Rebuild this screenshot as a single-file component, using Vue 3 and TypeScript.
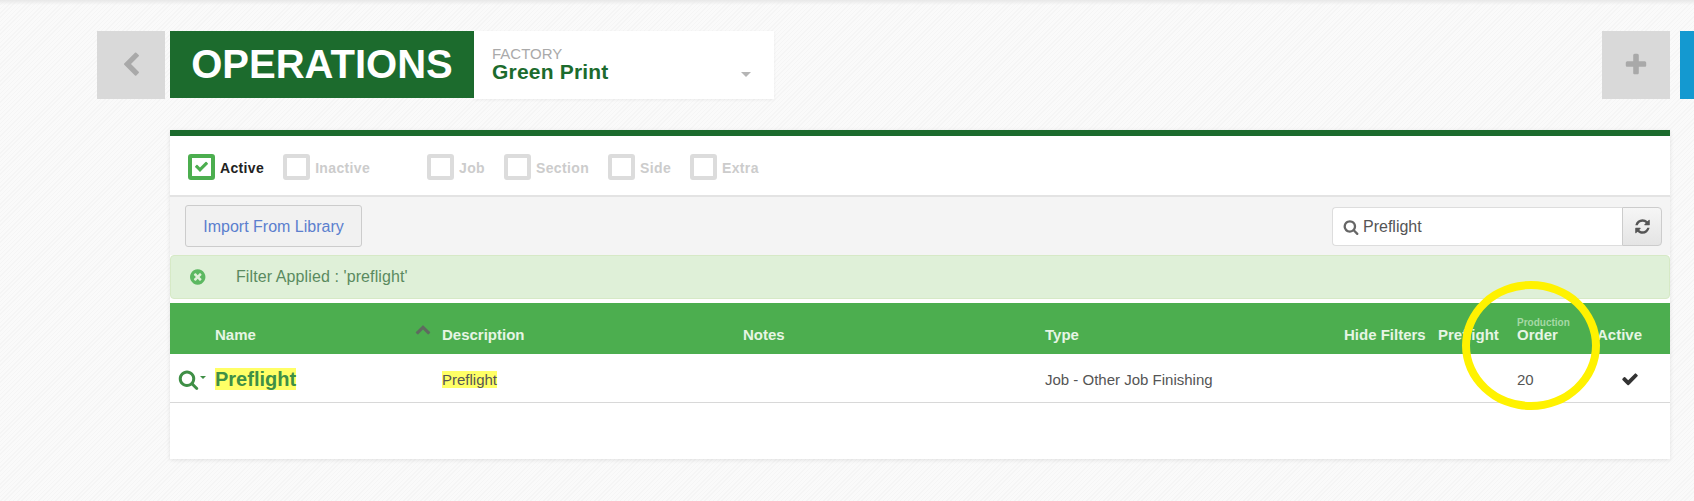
<script setup lang="ts">
type Filter = { label: string; checked?: boolean; gapAfter?: boolean }

const filters: Filter[] = [
  { label: 'Active', checked: true },
  { label: 'Inactive', gapAfter: true },
  { label: 'Job' },
  { label: 'Section' },
  { label: 'Side' },
  { label: 'Extra' }
]

// icon paths, all on a 1792 box
const icons = {
  chevronLeft: 'M1427 301l-531 531 531 531q19 19 19 45t-19 45l-166 166q-19 19-45 19t-45-19l-742-742q-19-19-19-45t19-45l742-742q19-19 45-19t45 19l166 166q19 19 19 45t-19 45z',
  chevronUp: 'M1683 1331l-166 165q-19 19-45 19t-45-19l-531-531-531 531q-19 19-45 19t-45-19l-166-165q-19-19-19-45.5t19-45.5l742-741q19-19 45-19t45 19l742 741q19 19 19 45.5t-19 45.5z',
  plus: 'M1600 736v192q0 40-28 68t-68 28h-416v416q0 40-28 68t-68 28h-192q-40 0-68-28t-28-68v-416h-416q-40 0-68-28t-28-68v-192q0-40 28-68t68-28h416v-416q0-40 28-68t68-28h192q40 0 68 28t28 68v416h416q40 0 68 28t28 68z',
  check: 'M1671 566q0 40-28 68l-724 724-136 136q-28 28-68 28t-68-28l-136-136-362-362q-28-28-28-68t28-68l136-136q28-28 68-28t68 28l294 295 656-657q28-28 68-28t68 28l136 136q28 28 28 68z',
  search: 'M1216 832q0-185-131.500-316.500t-316.500-131.500-316.500 131.500-131.500 316.500 131.500 316.500 316.500 131.500 316.500-131.500 131.500-316.500zm512 832q0 52-38 90t-90 38q-54 0-90-38l-343-342q-179 124-399 124-143 0-273.500-55.500t-225-150-150-225-55.500-273.500 55.500-273.500 150-225 225-150 273.500-55.500 273.500 55.500 225 150 150 225 55.500 273.500q0 220-124 399l343 343q37 37 37 90z',
  refresh: 'M1639 1056q0 5-1 7-64 268-268 434.500t-478 166.500q-146 0-282.500-55t-243.500-157l-129 129q-19 19-45 19t-45-19-19-45v-448q0-26 19-45t45-19h448q26 0 45 19t19 45-19 45l-137 137q71 66 161 102t187 36q134 0 250-65t186-179q11-17 53-117 8-23 30-23h192q13 0 22.500 9.500t9.500 22.500zm25-800v448q0 26-19 45t-45 19h-448q-26 0-45-19t-19-45 19-45l138-138q-148-137-349-137-134 0-250 65t-186 179q-11 17-53 117-8 23-30 23h-199q-13 0-22.500-9.500t-9.500-22.500v-7q65-268 270-434.500t480-166.500q146 0 284 55.500t245 156.500l130-129q19-19 45-19t45 19 19 45z',
  timesCircle: 'M1149 1122q0-26-19-45l-181-181 181-181q19-19 19-45 0-27-19-46l-90-90q-19-19-46-19-26 0-45 19l-181 181-181-181q-19-19-45-19-27 0-46 19l-90 90q-19 19-19 46 0 26 19 45l181 181-181 181q-19 19-19 45 0 27 19 46l90 90q19 19 46 19 26 0 45-19l181-181 181 181q19 19 45 19 27 0 46-19l90-90q19-19 19-46zm387-226q0 209-103 385.500t-279.500 279.500-385.500 103-385.500-103-279.500-279.500-103-385.500 103-385.500 279.500-279.500 385.500-103 385.500 103 279.500 279.500 103 385.500z'
}
</script>

<template>
  <div class="page">
    <header class="top">
      <button class="square back" aria-label="Back">
        <svg width="26" height="26" viewBox="0 0 1792 1792" fill="#a9a9a9"><path :d="icons.chevronLeft" /></svg>
      </button>
      <h1 class="title">OPERATIONS</h1>
      <div class="factory">
        <div class="factory-text">
          <span class="factory-label">FACTORY</span>
          <span class="factory-name">Green Print</span>
        </div>
        <span class="caret"></span>
      </div>
      <div class="spacer"></div>
      <button class="square add" aria-label="Add">
        <svg width="26" height="26" viewBox="0 0 1792 1792" fill="#a9a9a9"><path :d="icons.plus" /></svg>
      </button>
      <div class="blue"></div>
    </header>

    <main class="panel">
      <div class="filters">
        <label v-for="f in filters" :key="f.label" :class="['filter', { on: f.checked, gap: f.gapAfter }]">
          <span class="box">
            <svg v-if="f.checked" width="15" height="15" viewBox="0 0 1792 1792" fill="#4cae4f"><path :d="icons.check" /></svg>
          </span>
          <span class="filter-text">{{ f.label }}</span>
        </label>
      </div>

      <div class="toolbar">
        <button class="import">Import From Library</button>
        <div class="search">
          <div class="search-input">
            <svg width="16" height="16" viewBox="0 0 1792 1792" fill="#666"><path :d="icons.search" /></svg>
            <span>Preflight</span>
          </div>
          <button class="refresh" aria-label="Refresh">
            <svg width="17" height="17" viewBox="0 0 1792 1792" fill="#555"><path :d="icons.refresh" /></svg>
          </button>
        </div>
      </div>

      <div class="alert">
        <svg width="18" height="18" viewBox="0 0 1792 1792" fill="#5cb861"><path :d="icons.timesCircle" /></svg>
        <span>Filter Applied : 'preflight'</span>
      </div>

      <div class="grid head">
        <span></span>
        <span class="sort-cell">Name
          <svg class="sort" width="16" height="16" viewBox="0 0 1792 1792" fill="#5e6b5f"><path :d="icons.chevronUp" /></svg>
        </span>
        <span>Description</span>
        <span>Notes</span>
        <span>Type</span>
        <span>Hide Filters</span>
        <span>Preflight</span>
        <span class="stack"><small>Production</small>Order</span>
        <span>Active</span>
      </div>

      <div class="grid row">
        <span class="row-icon">
          <svg width="21" height="21" viewBox="0 0 1792 1792" fill="#3f8f46"><path :d="icons.search" /></svg>
          <i class="mini-caret"></i>
        </span>
        <span class="name"><mark>Preflight</mark></span>
        <span><mark>Preflight</mark></span>
        <span></span>
        <span>Job - Other Job Finishing</span>
        <span></span>
        <span></span>
        <span>20</span>
        <span class="check">
          <svg width="18" height="18" viewBox="0 0 1792 1792" fill="#333"><path :d="icons.check" /></svg>
        </span>
      </div>
      <div class="circle"></div>
    </main>
  </div>
</template>

<style>
html,
body {
  margin: 0;
  background: #fafafa;
}
</style>

<style scoped>
.page {
  box-sizing: border-box;
  width: 1694px;
  height: 501px;
  padding-top: 31px;
  overflow: hidden;
  font-family: "Liberation Sans", Arial, sans-serif;
  color: #555;
  background-color: #fafafa;
  background-image:
    linear-gradient(#e8e8e8, rgba(232, 232, 232, 0) 5px),
    repeating-linear-gradient(135deg, #f5f5f5 0 1px, transparent 1px 3px);
}

button {
  font-family: inherit;
}

.top {
  display: flex;
  height: 68px;
  padding-left: 97px;
}

.square {
  display: flex;
  align-items: center;
  justify-content: center;
  width: 68px;
  height: 68px;
  padding: 0;
  border: 0;
  background: #d9d9d9;
}

.title {
  margin: 0 0 0 5px;
  width: 304px;
  font-size: 40px;
  line-height: 66px;
  height: 67px;
  font-weight: 700;
  text-align: center;
  color: #fff;
  background: #1c6b2d;
}

.factory {
  display: flex;
  justify-content: space-between;
  width: 300px;
  height: 68px;
  background: #fff;
  box-shadow: 0 1px 3px rgba(0, 0, 0, 0.06);
}

.factory-text {
  display: flex;
  flex-direction: column;
  padding: 15px 0 0 18px;
}

.factory-label {
  font-size: 15px;
  line-height: 15px;
  color: #aaa;
}

.factory-name {
  font-size: 21px;
  line-height: 22px;
  font-weight: 700;
  letter-spacing: 0.2px;
  color: #1c6b2d;
}

.caret {
  margin: 41px 23px 0 0;
  width: 0;
  height: 0;
  border-left: 5px solid transparent;
  border-right: 5px solid transparent;
  border-top: 5px solid #b5b5b5;
}

.spacer {
  flex: 1;
}

.blue {
  margin-left: 10px;
  width: 14px;
  background: #1499d0;
}

.panel {
  position: relative;
  box-sizing: border-box;
  width: 1500px;
  height: 329px;
  margin: 31px 0 0 170px;
  border-top: 6px solid #1c6b2d;
  background: #fff;
  box-shadow: 0 1px 4px rgba(0, 0, 0, 0.1);
}

.filters {
  display: flex;
  align-items: center;
  height: 57px;
  padding: 2px 0 0 18px;
  border-bottom: 2px solid #e3e3e3;
}

.filter {
  display: flex;
  align-items: center;
  gap: 5px;
  margin-right: 19px;
  font-size: 14px;
  letter-spacing: 0.35px;
  font-weight: 700;
  color: #ccc;
}

.filter-text {
  margin-top: 3px;
}

.filter.on {
  color: #222;
}

.filter.gap {
  margin-right: 57px;
}

.box {
  box-sizing: border-box;
  display: flex;
  align-items: center;
  justify-content: center;
  width: 27px;
  height: 26px;
  border: 4px solid #dcdcdc;
  border-radius: 3px;
}

.on .box {
  border-color: #4cae4f;
}

.toolbar {
  display: flex;
  justify-content: space-between;
  height: 58px;
  padding: 8px 8px 0 15px;
  box-sizing: border-box;
  background: #f4f4f4;
}

.import {
  width: 177px;
  height: 42px;
  padding: 2px 0 0;
  border: 1px solid #ccc;
  border-radius: 3px;
  background: #f1f1f1;
  font-size: 16px;
  color: #5b7fce;
}

.search {
  display: flex;
  height: 39px;
  margin-top: 2px;
}

.search-input {
  box-sizing: border-box;
  display: flex;
  align-items: center;
  gap: 4px;
  width: 290px;
  padding-left: 10px;
  border: 1px solid #ddd;
  border-right: 0;
  border-radius: 4px 0 0 4px;
  background: #fff;
  font-size: 16px;
  color: #555;
}

.refresh {
  display: flex;
  align-items: center;
  justify-content: center;
  width: 40px;
  padding: 0;
  border: 1px solid #ccc;
  border-radius: 0 4px 4px 0;
  background: linear-gradient(#f6f6f6, #e4e4e4);
}

.alert {
  box-sizing: border-box;
  display: flex;
  align-items: center;
  gap: 28px;
  height: 44px;
  padding-left: 19px;
  border: 1px solid #d6e9c6;
  border-radius: 4px;
  background: #dff0d8;
  font-size: 16px;
  letter-spacing: 0.1px;
  color: #5a8a5f;
}

.grid {
  display: grid;
  grid-template-columns: 45px 227px 301px 302px 299px 94px 79px 80px 73px;
}

.head {
  height: 51px;
  margin-top: 4px;
  background: #4cae4f;
  font-size: 15px;
  font-weight: 700;
  color: #e6f5e4;
  box-sizing: border-box;
}

.head > span {
  align-self: end;
  padding-bottom: 11px;
}

.head > .stack {
  padding-bottom: 12px;
}

.sort-cell {
  display: flex;
  justify-content: space-between;
}

.sort {
  margin: -5px 11px 0 0;
}

.stack {
  display: flex;
  flex-direction: column;
  line-height: 14px;
}

.stack small {
  font-size: 10px;
  line-height: 10px;
  font-weight: 700;
  color: #a5d9a5;
}

.row {
  box-sizing: border-box;
  align-items: center;
  height: 49px;
  padding-top: 2px;
  border-bottom: 1px solid #d8d8d8;
  font-size: 15px;
  color: #555;
}

.row-icon {
  display: flex;
  align-items: center;
  gap: 1px;
  padding-left: 8px;
}

.mini-caret {
  width: 0;
  height: 0;
  margin-bottom: 4px;
  border-left: 3px solid transparent;
  border-right: 3px solid transparent;
  border-top: 3px solid #3f8f46;
}

.name {
  font-size: 20px;
  font-weight: 700;
  color: #3f8f46;
}

mark {
  background: #ffff66;
  color: inherit;
}

.check {
  padding-left: 24px;
  line-height: 0;
}

.circle {
  position: absolute;
  left: 1292px;
  top: 145px;
  width: 138px;
  height: 129px;
  box-sizing: border-box;
  border: 8px solid #fff200;
  border-radius: 50%;
}
</style>
